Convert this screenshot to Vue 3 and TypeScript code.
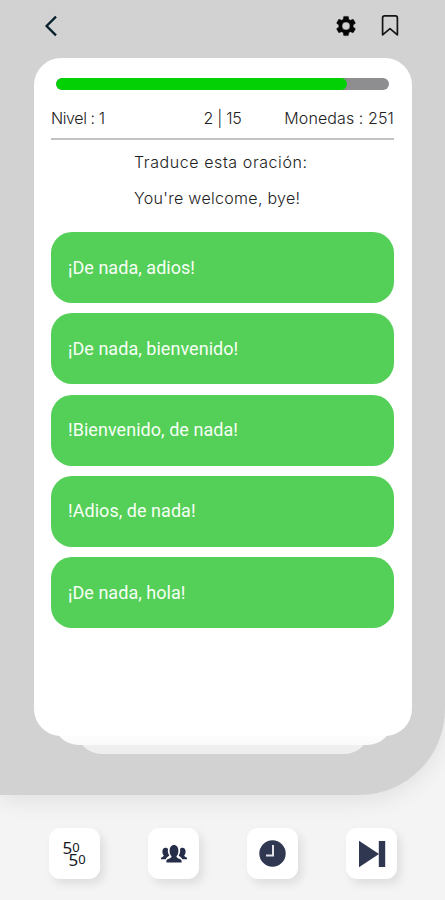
<script setup lang="ts">
import { ref } from 'vue'

interface Option {
  id: number
  text: string
}

const level = ref(1)
const current = ref(2)
const total = ref(15)
const coins = ref(251)
const timeLeft = ref(87.4)

const options: Option[] = [
  { id: 1, text: '¡De nada, adios!' },
  { id: 2, text: '¡De nada, bienvenido!' },
  { id: 3, text: '!Bienvenido, de nada!' },
  { id: 4, text: '!Adios, de nada!' },
  { id: 5, text: '¡De nada, hola!' },
]
</script>

<template>
  <div class="screen">
    <main class="panel">
      <header class="topbar">
        <button class="icon-btn" aria-label="Volver">
          <svg width="14" height="22" viewBox="0 0 14 22">
            <path d="M12 1.600 2.600 11l9.400 9.400" fill="none" stroke="#08202c" stroke-width="2.300" />
          </svg>
        </button>
        <div class="actions">
          <button class="icon-btn" aria-label="Ajustes">
            <svg width="24" height="24" viewBox="0 0 24 24">
              <path
                d="M19.14 12.94c.04-.3.06-.61.06-.94s-.02-.64-.07-.94l2.03-1.58c.18-.14.23-.41.12-.61l-1.92-3.32c-.12-.22-.37-.29-.59-.22l-2.39.96c-.5-.38-1.03-.7-1.62-.94l-.36-2.54c-.04-.24-.24-.41-.48-.41h-3.84c-.24 0-.43.17-.47.41l-.36 2.54c-.59.24-1.13.57-1.62.94l-2.39-.96c-.22-.08-.47 0-.59.22L2.74 8.87c-.12.21-.08.47.12.61l2.03 1.58c-.05.3-.09.63-.09.94s.02.64.07.94l-2.03 1.58c-.18.14-.23.41-.12.61l1.92 3.32c.12.22.37.29.59.22l2.39-.96c.5.38 1.03.7 1.62.94l.36 2.54c.05.24.24.41.48.41h3.84c.24 0 .44-.17.47-.41l.36-2.54c.59-.24 1.13-.56 1.62-.94l2.39.96c.22.08.47 0 .59-.22l1.92-3.32c.12-.22.07-.47-.12-.61l-2.01-1.58zM12 16a4 4 0 1 1 0-8 4 4 0 0 1 0 8z"
                fill="#050505"
                stroke="#050505"
                stroke-width="0.400"
              />
            </svg>
          </button>
          <button class="icon-btn" aria-label="Guardar">
            <svg width="18" height="22" viewBox="0 0 18 22">
              <path
                d="M1.600 19.800V2.900Q1.600.9 3.600.9h10.800q2 0 2 2v16.900L9 13.600Z"
                fill="none"
                stroke="#151515"
                stroke-width="1.700"
                stroke-linejoin="round"
              />
            </svg>
          </button>
        </div>
      </header>

      <div class="stack">
        <section class="card">
          <div class="progress">
            <div class="progress-fill" :style="{ width: timeLeft + '%' }"></div>
          </div>
          <div class="stats">
            <span class="level">Nivel : {{ level }}</span>
            <span class="count">{{ current }} | {{ total }}</span>
            <span class="coins">Monedas : {{ coins }}</span>
          </div>
          <div class="question">
            <p class="prompt">Traduce esta oración:</p>
            <p class="sentence">You're welcome, bye!</p>
          </div>
          <div class="options">
            <button v-for="option in options" :key="option.id" class="option">
              {{ option.text }}
            </button>
          </div>
        </section>
        <div class="layer middle"></div>
        <div class="layer back"></div>
      </div>
    </main>

    <footer class="lifelines">
      <button class="tile" aria-label="Cincuenta cincuenta">
        <span class="fifty">
          <span class="upper">5<small>0</small></span>
          <span class="lower">5<small>0</small></span>
        </span>
      </button>
      <button class="tile" aria-label="Público">
        <svg width="28" height="20" viewBox="0 0 28 20" fill="#252d48">
          <path d="M1 15.300v-1.200c0-1.200 2.900-1.400 2.900-2.700C2.800 10.300 2.400 9 2.400 7.400 2.400 5.100 3.600 3.700 5.500 3.700c1.100 0 2 .4 2.500 1.200-.5 2.600.1 4.900 1.300 6.300-.1.9-2.700 1.500-3.600 4.100Z" />
          <path d="M27 15.300v-1.200c0-1.200-2.900-1.400-2.900-2.700 1.100-1.100 1.500-2.400 1.500-4 0-2.300-1.200-3.700-3.100-3.700-1.100 0-2 .4-2.500 1.200.5 2.600-.1 4.900-1.300 6.300.1.9 2.700 1.500 3.600 4.100Z" />
          <path d="M6.400 18.500v-1.400c0-2.500 5.200-2.200 5.200-4.800-1.400-1.400-2-3.300-2-5.400C9.600 3.400 11.200 1 14 1s4.400 2.400 4.400 5.900c0 2.100-.6 4-2 5.400 0 2.600 5.200 2.300 5.200 4.800v1.400Z" />
        </svg>
      </button>
      <button class="tile" aria-label="Tiempo">
        <svg width="28" height="28" viewBox="0 0 28 28">
          <circle cx="13.500" cy="13.500" r="13.200" fill="#303750" />
          <path d="M14 5v10.500H7" fill="none" stroke="#e3e4ea" stroke-width="2" />
        </svg>
      </button>
      <button class="tile" aria-label="Saltar">
        <svg width="28" height="28" viewBox="0 0 28 28" fill="#303750">
          <path d="M1 .7 21 14 1 27.300Z" />
          <path d="M20.800 1h6.400v26h-6.400z" />
        </svg>
      </button>
    </footer>
  </div>
</template>

<style>
body {
  margin: 0;
  background: #f4f4f4;
}
</style>

<style scoped>
.screen {
  box-sizing: border-box;
  width: 445px;
  height: 900px;
  display: flex;
  flex-direction: column;
  overflow: hidden;
  background: #f4f4f4;
  font-family: Inter, 'Liberation Sans', sans-serif;
  color: #222;
}
button {
  border: 0;
  padding: 0;
  margin: 0;
  background: none;
  font: inherit;
}
.panel {
  box-sizing: border-box;
  height: 795px;
  padding: 0 33px 0 34px;
  background: #d2d2d2;
  border-bottom-right-radius: 86px;
  box-shadow: 0 6px 22px rgba(0, 0, 0, 0.08);
}
.topbar {
  box-sizing: border-box;
  height: 58px;
  padding: 0 13px 6px 10px;
  display: flex;
  align-items: center;
  justify-content: space-between;
}
.actions {
  display: flex;
  align-items: center;
  gap: 23px;
}
.icon-btn {
  display: flex;
}
.stack {
  position: relative;
  isolation: isolate;
}
.card {
  box-sizing: border-box;
  height: 678px;
  padding: 20px 18px 0 17px;
  border-radius: 27px;
  background: #fff;
}
.layer {
  position: absolute;
  height: 80px;
  border-radius: 26px;
}
.middle {
  z-index: -1;
  left: 19px;
  right: 19px;
  bottom: -9px;
  background: linear-gradient(#fff 80%, #fafafa);
}
.back {
  z-index: -2;
  left: 42px;
  right: 42px;
  bottom: -18px;
  background: #efefef;
}
.progress {
  height: 12px;
  margin: 0 5px;
  border-radius: 6px;
  background: #8e8e90;
  overflow: hidden;
}
.progress-fill {
  height: 100%;
  border-radius: 6px;
  background: #04d006;
}
.stats {
  box-sizing: border-box;
  height: 50px;
  padding-top: 17px;
  display: grid;
  grid-template-columns: 1fr auto 1fr;
  border-bottom: 2px solid #c3c3c3;
  font-size: 16px;
  line-height: 22px;
  font-weight: 300;
  white-space: nowrap;
}
.level {
  letter-spacing: -0.4px;
}
.count {
  letter-spacing: -0.3px;
}
.coins {
  text-align: right;
  letter-spacing: 0.1px;
}
.question {
  box-sizing: border-box;
  height: 92px;
  padding: 10px 0 0 83px;
  font-size: 16px;
  line-height: 24px;
  font-weight: 300;
  white-space: nowrap;
}
.question p {
  margin: 0 0 12px;
}
.prompt {
  letter-spacing: 0.58px;
}
.sentence {
  letter-spacing: 0.3px;
}
.options {
  display: flex;
  flex-direction: column;
  gap: 10.3px;
}
.option {
  height: 71px;
  padding: 0 17px 1px;
  border-radius: 21px;
  background: #54cf58;
  color: #f7fff6;
  font-family: Roboto, sans-serif;
  font-size: 18px;
  letter-spacing: 0.04px;
  text-align: left;
}
.lifelines {
  display: flex;
  gap: 48px;
  padding: 33px 48px 0 49px;
}
.tile {
  width: 51px;
  height: 51px;
  display: flex;
  align-items: center;
  justify-content: center;
  border-radius: 11px;
  background: #fff;
  box-shadow: 4px 5px 10px rgba(0, 0, 0, 0.09);
}
.fifty {
  display: flex;
  flex-direction: column;
  width: 24px;
  font-family: 'Noto Sans', sans-serif;
  font-size: 17px;
  line-height: 12px;
  text-align: left;
  color: #17191f;
}
.upper,
.lower {
  display: flex;
}
.fifty small {
  font-size: 13px;
  line-height: 10px;
}
.lower {
  padding-left: 6px;
}
</style>
